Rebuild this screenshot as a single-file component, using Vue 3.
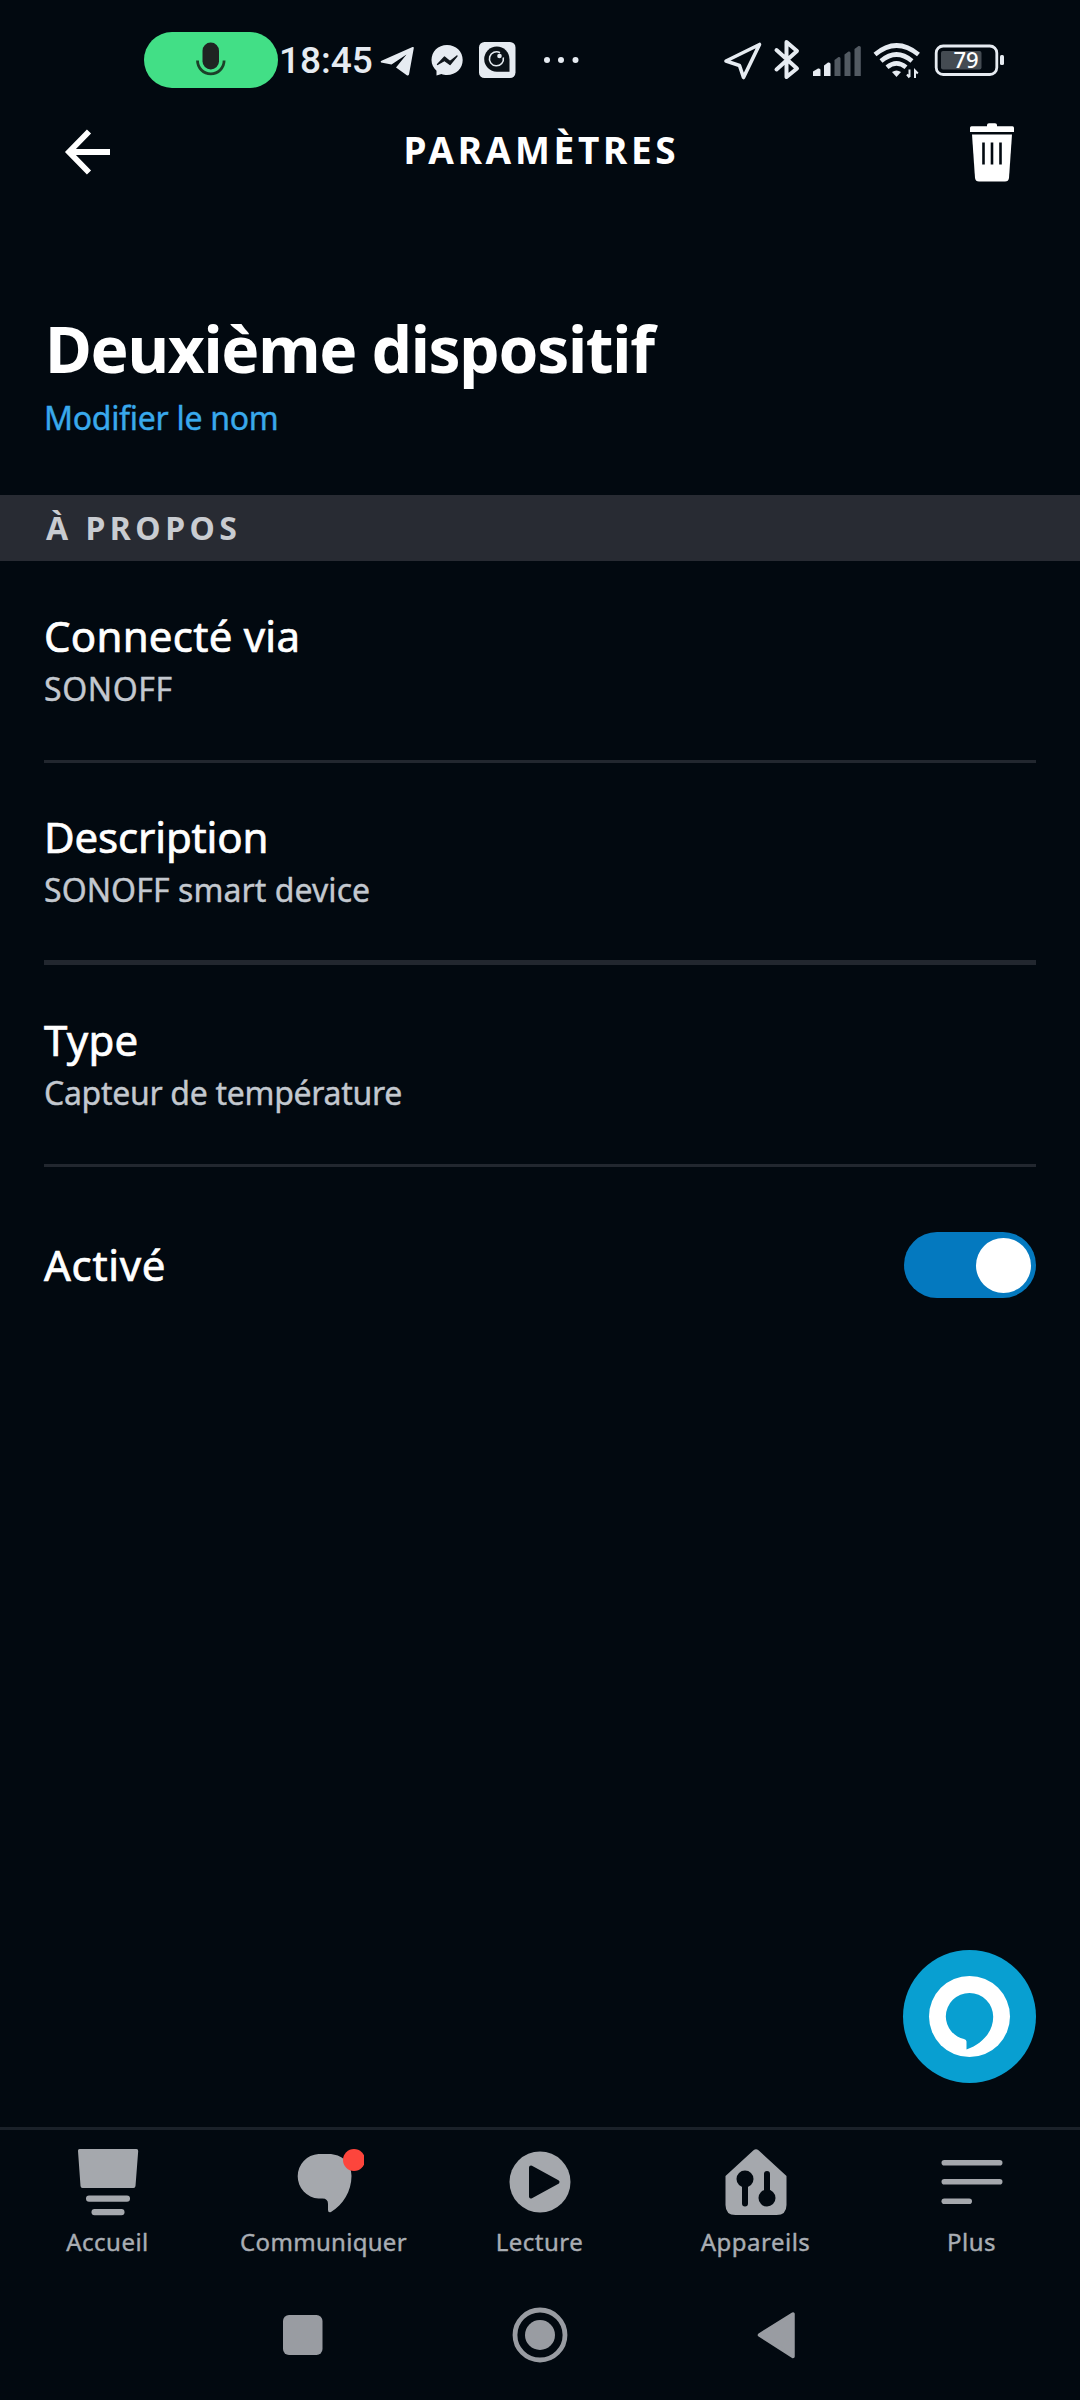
<script setup>
import { ref } from 'vue'

const rows = [
  { id: 'via', title: 'Connecté via', value: 'SONOFF' },
  { id: 'description', title: 'Description', value: 'SONOFF smart device' },
  { id: 'type', title: 'Type', value: 'Capteur de température' },
]
const enabled = ref(true)
</script>

<template>
  <div class="screen">
    <div class="status">
      <div class="mic-pill">
        <svg width="30" height="36" viewBox="196 42 30 36">
          <rect x="202.500" y="42.500" width="16.500" height="27" rx="8.200" fill="#1f2422" />
          <path d="M197.500 60.500a13.300 13.300 0 0 0 26.600 0" fill="none" stroke="#1c4029" stroke-width="2.800" />
        </svg>
      </div>
      <span class="clock">18:45</span>
      <svg width="46" height="60" viewBox="376 30 46 60">
        <path d="M381 62.500Q380 61.500 381.500 60.800L412.500 47Q414 46.600 413.800 48L409 74.500Q408.300 76.200 406.800 75.300L396 67.500L406.500 54.500L391.500 64.500Z" fill="#e6ebf1" />
      </svg>
      <svg width="49" height="60" viewBox="422 30 49 60">
        <path d="M447 45C438 45 431.500 51.500 431.500 60C431.500 64.500 433.500 68 436.500 70.700V75.500L441.500 74C443 74.600 445 75 447 75C456 75 462.700 68.500 462.700 60S456 45 447 45Z" fill="#e6ebf1" />
        <path d="M437.500 64.500L444.500 57L450 61.500L457 56L450 64.500L444.500 60.500Z" fill="#10161c" stroke="#10161c" stroke-width="1.300" stroke-linejoin="round" />
      </svg>
      <svg width="53" height="60" viewBox="471 30 53 60">
        <rect x="479" y="42" width="36.500" height="36" rx="5.500" fill="#e6ebf1" />
        <path d="M496.800 46.500A12.700 12.700 0 0 1 509.500 59.200V71.700H496.800A12.600 12.600 0 0 1 496.800 46.500Z" fill="#0b1117" />
        <path d="M500 52.800A7 7 0 1 0 503.300 57.500" fill="none" stroke="#e6ebf1" stroke-width="1.600" />
        <circle cx="499.500" cy="56" r="2.300" fill="#e6ebf1" />
      </svg>
      <svg width="76" height="60" viewBox="524 30 76 60" fill="#e6ebf1">
        <circle cx="547" cy="60" r="3" /><circle cx="561" cy="60" r="3" /><circle cx="575.500" cy="60" r="3" />
      </svg>
      <div class="spacer"></div>
      <svg width="50" height="60" viewBox="716 30 50 60">
        <path d="M759.500 44.500L743.500 77.500L739.500 65.500L726 61Z" fill="none" stroke="#e6ebf1" stroke-width="3.600" stroke-linejoin="round" />
      </svg>
      <svg width="40" height="60" viewBox="766 30 40 60">
        <path d="M776.500 50L797 68.500L786.500 77V42L797 51L776.500 69.500" fill="none" stroke="#e6ebf1" stroke-width="4" stroke-linejoin="round" stroke-linecap="round" />
      </svg>
      <svg width="60" height="60" viewBox="806 30 60 60">
        <path d="M813 76V71.500L818 68.500Q820.500 68 820.500 70V76Z" fill="#e6ebf1" />
        <path d="M824 76V65.500L828 62.500Q830.500 62 830.500 64V76Z" fill="#e6ebf1" />
        <g fill="#525a62">
          <path d="M834.500 76V60L838.500 57Q840.500 56.500 840.500 58.500V76Z" />
          <path d="M844.500 76V54.500L848.500 51.500Q850.500 51 850.500 53V76Z" />
          <path d="M854.500 76V49L858.500 46Q860.800 45.500 860.800 47.500V76Z" />
        </g>
      </svg>
      <svg width="60" height="60" viewBox="866 30 60 60">
        <g fill="none" stroke="#e6ebf1" stroke-width="4.600">
          <path d="M875 54.500Q896.500 36.500 918.500 54.500" />
          <path d="M881 61Q896.500 48 912 61" />
          <path d="M887 67.300Q896.500 59.500 906 67.300" />
        </g>
        <path d="M892 72Q896.500 69 901 72L896.500 77Z" fill="#e6ebf1" />
        <path d="M909.500 69.500V77M907 74.500L909.500 77.500M915 78V70.500L917.800 73.500" fill="none" stroke="#e6ebf1" stroke-width="2" />
      </svg>
      <svg width="90" height="60" viewBox="926 30 90 60">
        <rect x="936.200" y="46" width="60.600" height="28.500" rx="7" fill="none" stroke="#e6ebf1" stroke-width="2.800" />
        <rect x="941" y="51" width="40.500" height="18.500" rx="2" fill="#444b52" />
        <rect x="1000" y="55" width="4" height="10" rx="1.500" fill="#e6ebf1" />
        <text x="966" y="68" class="battery-text" text-anchor="middle">79</text>
      </svg>
    </div>

    <header class="header">
      <svg class="back" width="48" height="48" viewBox="64 127 48 48">
        <path d="M110 151H69M89 130.500L69 151L89 171.500" fill="none" stroke="#fff" stroke-width="5.800" />
      </svg>
      <h1 class="header-title">PARAMÈTRES</h1>
      <svg width="48" height="64" viewBox="968 121 48 64">
        <path d="M987 125Q987 123.300 989 123.300H995Q997 123.300 997 125V126.300H1012.500Q1014 126.300 1014 128V132H970V128Q970 126.300 971.500 126.300H987Z" fill="#fff" />
        <path d="M972 134.500H1012L1009 178Q1008.500 181.500 1005 181.500H979Q975.500 181.500 975 178Z" fill="#fff" />
        <path d="M983.500 142.500V164.500M992 142.500V164.500M1000.500 142.500V164.500" stroke="#020910" stroke-width="2.600" />
      </svg>
    </header>

    <main class="content">
      <h2 class="device-name">Deuxième dispositif</h2>
      <a class="rename">Modifier le nom</a>
      <div class="section"><span>À PROPOS</span></div>
      <div v-for="row in rows" :key="row.id" class="row" :class="row.id">
        <span class="row-title">{{ row.title }}</span>
        <span class="row-value">{{ row.value }}</span>
      </div>
      <div class="toggle-row">
        <span class="row-title active-title">Activé</span>
        <button class="toggle" :class="{ on: enabled }" @click="enabled = !enabled"><i></i></button>
      </div>
    </main>

    <button class="assistant">
      <svg width="133" height="133" viewBox="903 1950 133 133">
        <circle cx="969.500" cy="2016.500" r="40.500" fill="#fff" />
        <path d="M969.500 1993A23.700 23.700 0 0 1 993.200 2016.700C993.200 2032 982 2044 966.500 2049.500V2041.500Q966.500 2039.500 964 2039A23.500 23.500 0 0 1 945.800 2016.500A23.700 23.700 0 0 1 969.500 1993Z" fill="#089fd1" />
      </svg>
    </button>

    <nav class="tabs">
      <div class="tab">
        <svg width="80" height="80" viewBox="68 2140 80 80" fill="#a5a8ad">
          <path d="M79.500 2149H136.500Q138.300 2149 138.200 2151L135.500 2186Q135.300 2188 133.500 2188H82.500Q80.700 2188 80.500 2186L78 2151Q77.800 2149 79.500 2149Z" />
          <rect x="86" y="2195.500" width="44" height="6.300" rx="3" />
          <rect x="91.500" y="2209" width="33" height="6.300" rx="3" />
        </svg>
        <span class="t1">Accueil</span>
      </div>
      <div class="tab">
        <svg width="80" height="80" viewBox="284 2140 80 80">
          <path d="M318.500 2154H328.500C342 2154 351.500 2163 351.500 2176C351.500 2191 343 2205 331 2212Q328 2213 328 2210V2204Q328 2198.500 322.500 2198.500H318.500A22.300 22.300 0 0 1 318.500 2154Z" fill="#a5a8ad" />
          <circle cx="354" cy="2160" r="11" fill="#fd453c" />
        </svg>
        <span class="t2">Communiquer</span>
      </div>
      <div class="tab">
        <svg width="80" height="80" viewBox="500 2140 80 80">
          <circle cx="540" cy="2182" r="30.500" fill="#a5a8ad" />
          <path d="M531 2167.500L557.500 2182L531 2196.500Z" fill="#020910" stroke="#020910" stroke-width="4" stroke-linejoin="round" />
        </svg>
        <span class="t3">Lecture</span>
      </div>
      <div class="tab">
        <svg width="80" height="80" viewBox="716 2140 80 80">
          <path d="M753.500 2150.300Q756 2148 758.500 2150.300L786.500 2176V2205Q786.500 2215 776.500 2215H735.500Q725.500 2215 725.500 2205V2176Z" fill="#a5a8ad" />
          <circle cx="745" cy="2179" r="8.500" fill="#020910" />
          <circle cx="767" cy="2198" r="8.500" fill="#020910" />
          <path d="M745 2180V2203.500M767 2174V2198" stroke="#020910" stroke-width="6" stroke-linecap="round" />
        </svg>
        <span class="t4">Appareils</span>
      </div>
      <div class="tab">
        <svg width="80" height="80" viewBox="932 2140 80 80" fill="#a5a8ad">
          <rect x="941.500" y="2160" width="61" height="5.600" rx="2.800" />
          <rect x="941.500" y="2179" width="61" height="5.600" rx="2.800" />
          <rect x="941.500" y="2198.500" width="30.500" height="5.600" rx="2.800" />
        </svg>
        <span class="t5">Plus</span>
      </div>
    </nav>

    <div class="system-nav">
      <svg width="60" height="60" viewBox="273 2305 60 60"><rect x="283" y="2315" width="39.500" height="40" rx="6" fill="#999ca2" /></svg>
      <svg width="60" height="60" viewBox="510 2305 60 60">
        <circle cx="540" cy="2335" r="25" fill="none" stroke="#999ca2" stroke-width="4.800" />
        <circle cx="540" cy="2335" r="15" fill="#999ca2" />
      </svg>
      <svg width="60" height="60" viewBox="747 2305 60 60"><path d="M759.500 2335L793 2314V2356.500Z" fill="#999ca2" stroke="#999ca2" stroke-width="3.500" stroke-linejoin="round" /></svg>
    </div>
  </div>
</template>

<style>
body { background: #020910; }
</style>

<style scoped>
.screen {
  position: relative;
  display: flex;
  flex-direction: column;
  width: 1080px;
  height: 2400px;
  overflow: hidden;
  background: #020910;
  color: #fff;
  font-family: "Noto Sans", "Open Sans", sans-serif;
}
svg { display: block; flex: none; }
button { border: 0; padding: 0; }
h1, h2 { margin: 0; }

.status { display: flex; align-items: center; height: 120px; padding: 0 64px 0 144px; }
.mic-pill {
  display: flex;
  align-items: center;
  justify-content: center;
  width: 134px;
  height: 56px;
  border-radius: 28px;
  background: #42df86;
}
.clock {
  width: 97px;
  padding: 2px 0 0 1px;
  font: 500 37px/44px Roboto, sans-serif;
  color: #e6ebf1;
  white-space: nowrap;
}
.spacer { flex: 1; }
.battery-text { font: 500 22px "Noto Sans", sans-serif; fill: #fff; }

.header {
  display: flex;
  align-items: center;
  justify-content: space-between;
  height: 66px;
  padding: 0 64px;
}
.header-title {
  padding: 0 0 7px 3px;
  font-size: 37px;
  line-height: 50px;
  font-weight: 700;
  letter-spacing: 3.700px;
}
.back { margin-top: -3px; }

.content { display: flex; flex-direction: column; }
.device-name {
  margin: 123px 0 0 45px;
  font-size: 64px;
  line-height: 80px;
  font-weight: 700;
  letter-spacing: -1.300px;
  white-space: nowrap;
}
.rename {
  margin: 7px 0 0 44px;
  font-size: 32px;
  line-height: 44px;
  letter-spacing: -0.300px;
  color: #39a9ec;
  -webkit-text-stroke: 0.400px #39a9ec;
}
.section {
  display: flex;
  align-items: center;
  box-sizing: border-box;
  height: 66px;
  margin-top: 55px;
  padding: 0 0 2px 46px;
  background: #282b33;
  color: #c9ccd1;
  font-size: 32px;
  font-weight: 700;
  letter-spacing: 4.500px;
}
.row {
  display: flex;
  flex-direction: column;
  box-sizing: border-box;
  height: 202px;
  margin: 0 44px;
  padding-top: 47px;
  border-bottom: 3px solid #22272f;
  white-space: nowrap;
}
.row.description { padding-top: 46px; border-bottom: 5px solid #22272f; }
.row-title {
  font-size: 42px;
  line-height: 56px;
  letter-spacing: 0.250px;
  -webkit-text-stroke: 0.700px #fff;
}
.row-value {
  margin-top: 3px;
  font-size: 32px;
  line-height: 44px;
  color: #c3c8cf;
  -webkit-text-stroke: 0.400px #c3c8cf;
}
.via .row-value { letter-spacing: 0.600px; }
.description .row-title { letter-spacing: -0.150px; }
.description .row-value { letter-spacing: 0.080px; }
.type .row-value { letter-spacing: -0.300px; }
.active-title { letter-spacing: 0.700px; }
.toggle-row {
  display: flex;
  align-items: center;
  justify-content: space-between;
  height: 196px;
  margin: 0 44px;
}
.toggle {
  display: flex;
  align-items: center;
  box-sizing: border-box;
  width: 132px;
  height: 66px;
  padding: 0 5px;
  border-radius: 33px;
  background: #3a4048;
}
.toggle.on { justify-content: flex-end; background: #0479bf; }
.toggle i { width: 55px; height: 55px; border-radius: 50%; background: #fff; }

.assistant {
  position: absolute;
  right: 44px;
  bottom: 317px;
  width: 133px;
  height: 133px;
  border-radius: 50%;
  background: #089fd1;
}

.tabs {
  display: flex;
  box-sizing: border-box;
  height: 150px;
  margin-top: auto;
  padding-top: 10px;
  border-top: 3px solid #1a2129;
}
.tab {
  display: flex;
  flex-direction: column;
  align-items: center;
  flex: 1;
  color: #a9adb3;
  font-size: 24px;
  line-height: 34px;
  -webkit-text-stroke: 0.400px #a9adb3;
}
.tab span { margin: 5px 1px 0 0; letter-spacing: 0.500px; }
.tab .t2 { letter-spacing: 0.300px; }

.system-nav {
  display: flex;
  justify-content: center;
  gap: 177px;
  height: 95px;
  margin-top: 28px;
}
</style>
